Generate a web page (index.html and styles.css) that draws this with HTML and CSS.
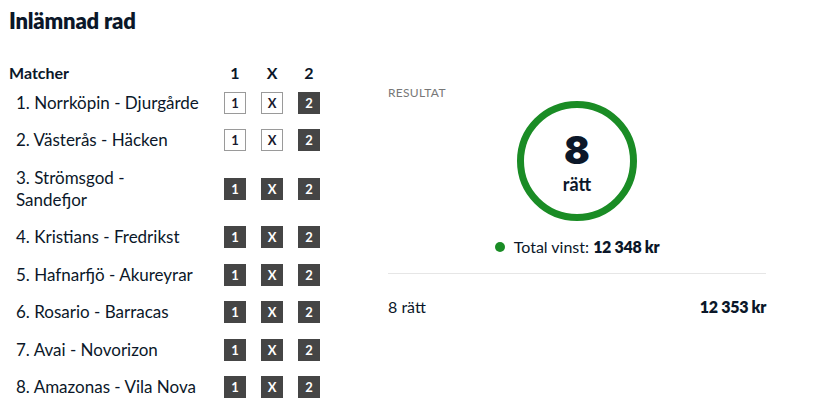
FILE: index.html
```html
<!DOCTYPE html>
<html lang="sv">
<head>
<meta charset="utf-8">
<title>Inlämnad rad</title>
<link rel="stylesheet" href="styles.css">
</head>
<body>
<div class="page">
  <h1 class="title">Inlämnad rad</h1>
  <div class="content">
    <div class="matches">
      <div class="row head">
        <div class="name">Matcher</div>
        <div class="col">1</div>
        <div class="col">X</div>
        <div class="col">2</div>
      </div>
      <div class="row">
        <div class="name ind">1. Norrköpin - Djurgårde</div>
        <div class="box">1</div><div class="box">X</div><div class="box on">2</div>
      </div>
      <div class="row">
        <div class="name ind">2. Västerås - Häcken</div>
        <div class="box">1</div><div class="box">X</div><div class="box on">2</div>
      </div>
      <div class="row">
        <div class="name ind">3. Strömsgod - Sandefjor</div>
        <div class="box on">1</div><div class="box on">X</div><div class="box on">2</div>
      </div>
      <div class="row">
        <div class="name ind">4. Kristians - Fredrikst</div>
        <div class="box on">1</div><div class="box on">X</div><div class="box on">2</div>
      </div>
      <div class="row">
        <div class="name ind">5. Hafnarfjö - Akureyrar</div>
        <div class="box on">1</div><div class="box on">X</div><div class="box on">2</div>
      </div>
      <div class="row">
        <div class="name ind">6. Rosario - Barracas</div>
        <div class="box on">1</div><div class="box on">X</div><div class="box on">2</div>
      </div>
      <div class="row">
        <div class="name ind">7. Avai - Novorizon</div>
        <div class="box on">1</div><div class="box on">X</div><div class="box on">2</div>
      </div>
      <div class="row">
        <div class="name ind">8. Amazonas - Vila Nova</div>
        <div class="box on">1</div><div class="box on">X</div><div class="box on">2</div>
      </div>
    </div>
    <div class="result">
      <div class="label">RESULTAT</div>
      <div class="ring">
        <div class="big">8</div>
        <div class="ratt">rätt</div>
      </div>
      <div class="total"><span class="dot"></span>Total vinst: <b>12&nbsp;348 kr</b></div>
      <div class="sum">
        <span>8 rätt</span>
        <b>12&nbsp;353 kr</b>
      </div>
    </div>
  </div>
</div>
</body>
</html>
```
FILE: styles.css
```css
* { box-sizing: border-box; }
html, body { margin: 0; padding: 0; background: #fff; }
body {
  font-family: Lato, "Noto Sans", sans-serif;
  color: #0b1729;
}
.page { padding: 6px 0 0 9px; }
.title {
  margin: 0;
  font-size: 22px;
  line-height: 30px;
  font-weight: 800;
  letter-spacing: -0.2px;
}
.content {
  display: flex;
  gap: 67px;
  margin-top: 26px;
}
.matches { width: 312px; }
.row {
  display: grid;
  grid-template-columns: 200px 22px 22px 22px;
  column-gap: 15px;
  align-items: center;
  padding: 7.75px 0;
  font-size: 17px;
  line-height: 22px;
}
.row.head {
  padding: 0;
  font-weight: 700;
  font-size: 16px;
}
.col { text-align: center; }
.name.ind { padding-left: 7px; padding-right: 10px; }
.box {
  width: 22px;
  height: 22px;
  border: 1px solid #9a9a9a;
  font-size: 13px;
  font-weight: 700;
  line-height: 20px;
  text-align: center;
  color: #1a1a2e;
}
.box.on {
  background: #454545;
  border-color: #454545;
  color: #fff;
}
.result {
  width: 378px;
  padding-top: 23px;
}
.label {
  font-size: 12px;
  color: #777;
  letter-spacing: 0.3px;
}
.ring {
  width: 120px;
  height: 120px;
  margin: 1px auto 0;
  border: 7px solid #1a8c25;
  border-radius: 50%;
  display: flex;
  flex-direction: column;
  align-items: center;
  justify-content: center;
}
.big {
  font-family: Inter, Lato, sans-serif;
  font-size: 38px;
  font-weight: 900;
  line-height: 46px;
}
.ratt {
  font-size: 18px;
  font-weight: 700;
  line-height: 22px;
}
.total {
  margin-top: 15px;
  text-align: center;
  font-size: 16px;
  line-height: 22px;
}
.total b { font-weight: 800; letter-spacing: -0.3px; }
.dot {
  display: inline-block;
  width: 10px;
  height: 10px;
  border-radius: 50%;
  background: #1a8c25;
  margin-right: 9px;
  vertical-align: 1px;
}
.sum {
  margin-top: 15px;
  border-top: 1px solid #e6e6e6;
  padding-top: 22px;
  display: flex;
  justify-content: space-between;
  font-size: 16px;
  line-height: 22px;
}
.sum b { font-weight: 800; letter-spacing: -0.3px; }
```
